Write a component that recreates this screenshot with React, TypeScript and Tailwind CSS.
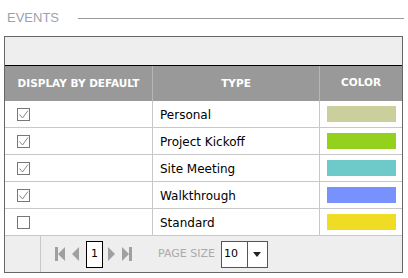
import React from 'react';

const events = [
  { name: 'Personal', checked: true, color: '#cbcf9b' },
  { name: 'Project Kickoff', checked: true, color: '#94d11d' },
  { name: 'Site Meeting', checked: true, color: '#6dcac8' },
  { name: 'Walkthrough', checked: true, color: '#7892fd' },
  { name: 'Standard', checked: false, color: '#f1dc25' },
];

function CheckBox({ checked }: { checked: boolean }) {
  return (
    <div className="w-[13px] h-[13px] border border-[#777] bg-white flex items-center justify-center">
      {checked && (
        <svg width="11" height="11" viewBox="0 0 11 11">
          <path d="M1.5 5.5 L4.5 9 L10 1.5" fill="none" stroke="#8a8a8a" strokeWidth="1" />
        </svg>
      )}
    </div>
  );
}

function PagerIcon({ kind }: { kind: 'first' | 'prev' | 'next' | 'last' }) {
  const fill = '#a0a0a0';
  if (kind === 'first')
    return (
      <svg width="11" height="14" viewBox="0 0 11 14">
        <rect x="0" y="0" width="3" height="14" fill={fill} />
        <path d="M10 0 L3 7 L10 14 Z" fill={fill} />
      </svg>
    );
  if (kind === 'last')
    return (
      <svg width="11" height="14" viewBox="0 0 11 14">
        <rect x="8" y="0" width="3" height="14" fill={fill} />
        <path d="M1 0 L8 7 L1 14 Z" fill={fill} />
      </svg>
    );
  if (kind === 'prev')
    return (
      <svg width="7" height="14" viewBox="0 0 7 14">
        <path d="M7 0 L0 7 L7 14 Z" fill={fill} />
      </svg>
    );
  return (
    <svg width="7" height="14" viewBox="0 0 7 14">
      <path d="M0 0 L7 7 L0 14 Z" fill={fill} />
    </svg>
  );
}

export default function App() {
  return (
    <div className="w-[408px] h-[278px] bg-white font-['DejaVu_Sans',sans-serif]">
      <div className="h-[36px] flex items-center pl-[7px] pr-[4px]">
        <span className="text-[13px] text-[#9aa2b0] font-['Liberation_Sans',sans-serif]">EVENTS</span>
        <div className="flex-1 h-px bg-[#999] ml-[19px]" />
      </div>
      <div className="ml-[4px] w-[399px] border border-[#666]">
        <div className="h-[29px] bg-[#eeeeee] border-b border-black" />
        <div className="grid grid-cols-[148px_167px_1fr] h-[35px] bg-[#999] text-white text-[10.5px] font-bold">
          <div className="flex items-center justify-center border-r border-[#b5b5b5]">DISPLAY BY DEFAULT</div>
          <div className="flex items-center justify-center border-r border-[#b5b5b5]">TYPE</div>
          <div className="flex items-center justify-center pb-[2px]">COLOR</div>
        </div>
        {events.map((e) => (
          <div key={e.name} className="grid grid-cols-[148px_167px_1fr] h-[27px] border-b border-[#c8c8c8] text-[12px] text-black">
            <div className="flex items-center pl-[12px] border-r border-[#c8c8c8]">
              <CheckBox checked={e.checked} />
            </div>
            <div className="flex items-center pl-[7px] pt-[1px] border-r border-[#c8c8c8]">{e.name}</div>
            <div className="flex items-center pl-[7px]">
              <div className="w-[69px] h-[16px]" style={{ backgroundColor: e.color }} />
            </div>
          </div>
        ))}
        <div className="h-[36px] bg-[#eeeeee] flex">
          <div className="w-[36px] border-r border-[#c8c8c8]" />
          <div className="flex items-center pl-[14px]">
            <PagerIcon kind="first" />
            <div className="ml-[6px]"><PagerIcon kind="prev" /></div>
            <div className="ml-[7px] w-[17px] h-[27px] bg-white border border-black flex items-center justify-center text-[11px] text-black">1</div>
            <div className="ml-[5px]"><PagerIcon kind="next" /></div>
            <div className="ml-[6px]"><PagerIcon kind="last" /></div>
            <span className="ml-[26px] text-[11px] text-[#aaaaaa]">PAGE SIZE</span>
            <div className="ml-[6px] w-[47px] h-[27px] bg-white border border-[#555] flex">
              <div className="w-[26px] border-r border-[#555] flex items-center pl-[2px] text-[11px] text-black">10</div>
              <div className="flex-1 flex items-center justify-center">
                <svg width="8" height="5" viewBox="0 0 8 5">
                  <path d="M0 0 L8 0 L4 5 Z" fill="#222" />
                </svg>
              </div>
            </div>
          </div>
        </div>
      </div>
    </div>
  );
}
